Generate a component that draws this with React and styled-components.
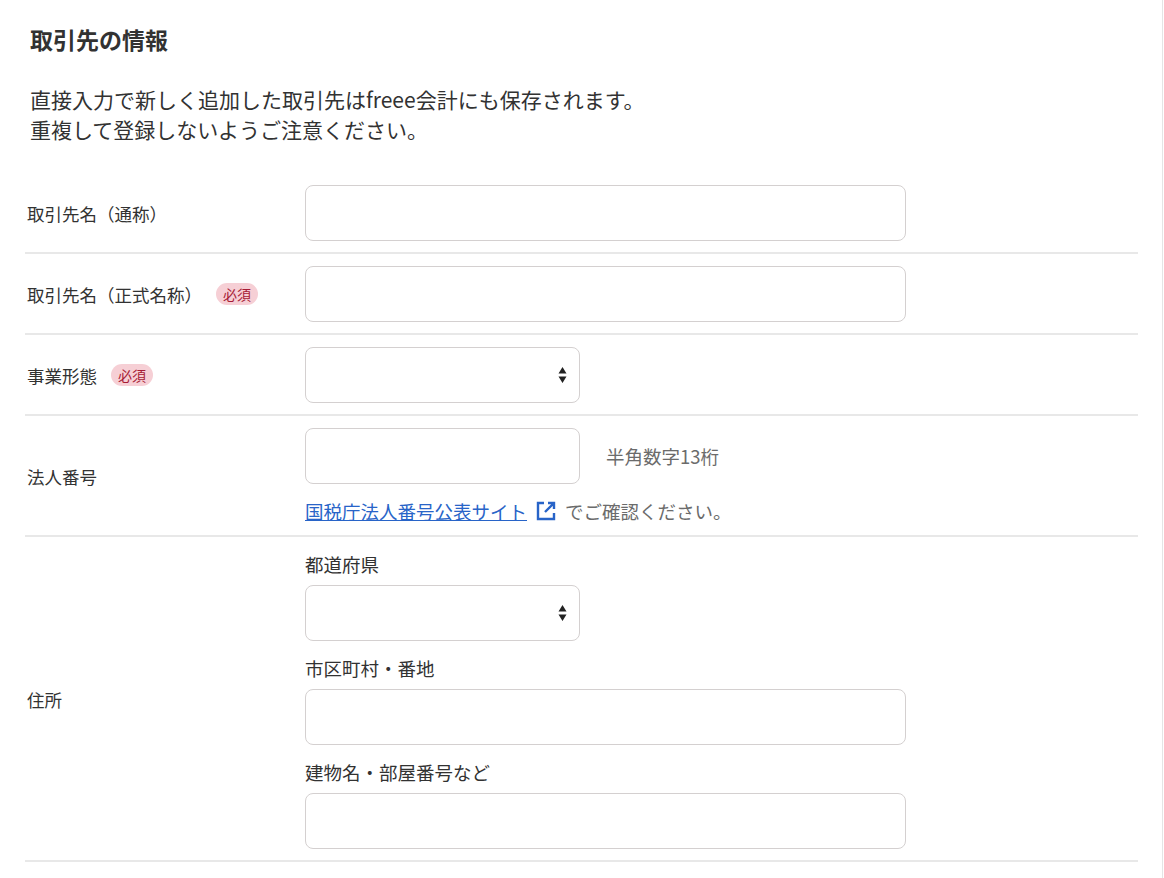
import React from 'react'
import styled, { createGlobalStyle } from 'styled-components'

const Global = createGlobalStyle`
  body { margin: 0; background: #fff; font-family: "Noto Sans CJK JP", "Noto Sans", sans-serif; color: #323232; }
`

const Panel = styled.div`
  width: 1163px;
  border-right: 1px solid #e5e5e5;
  box-sizing: border-box;
  padding: 20px 24px 16px 25px;
  min-height: 878px;
`

const Title = styled.h2`
  margin: 0 0 0 5px;
  font-size: 23px;
  font-weight: bold;
  line-height: 38px;
`

const Lead = styled.p`
  margin: 26px 0 29px 5px;
  font-size: 21px;
  line-height: 30px;
`

const Row = styled.div`
  display: grid;
  grid-template-columns: 280px 1fr;
  align-items: center;
  padding: 12px 0 11px;
  border-bottom: 2px solid #e8e8e8;
`

const Label = styled.div`
  display: flex;
  align-items: center;
  gap: 14px;
  font-size: 17.5px;
  padding-left: 2px;
`

const Required = styled.span`
  background: #f6cfd5;
  color: #a61b35;
  font-size: 14px;
  border-radius: 11px;
  padding: 1px 7px;
  line-height: 20px;
`

const Field = styled.div`
  display: flex;
  flex-direction: column;
`

const Line = styled.div`
  display: flex;
  align-items: center;
  gap: 26px;
`

const Input = styled.div`
  width: ${p => p.$w || 601}px;
  height: 56px;
  box-sizing: border-box;
  border: 1.5px solid #d4d0d0;
  border-radius: 8px;
  background: #fff;
  position: relative;
`

const Arrows = styled.svg`
  position: absolute;
  right: 12px;
  top: 50%;
  transform: translateY(-50%);
`

const Hint = styled.span`
  font-size: 18.5px;
  color: #6b6b6b;
`

const Note = styled.div`
  margin-top: 14px;
  font-size: 18.5px;
  color: #6b6b6b;
  display: flex;
  align-items: center;
  gap: 8px;
`

const Link = styled.a`
  color: #2864c8;
  text-decoration: underline;
`

const Sub = styled.div`
  font-size: 18.5px;
  line-height: 26px;
  margin: ${p => (p.$first ? '2px' : '14px')} 0 8px;
`

const Select = ({ w }) => (
  <Input $w={w}>
    <Arrows width="9" height="20" viewBox="0 0 9 20">
      <path d="M4.5 2L8.5 8.5H0.5Z M4.5 18L8.5 11.5H0.5Z" fill="#222" />
    </Arrows>
  </Input>
)

const External = () => (
  <svg width="22" height="22" viewBox="0 0 22 22" fill="none" stroke="#2864c8" strokeWidth="2.4">
    <path d="M9 3H3v16h16v-6" />
    <path d="M13 3h6v6M19 3l-9 9" />
  </svg>
)

export default function App() {
  return (
    <>
      <Global />
      <Panel>
        <Title>取引先の情報</Title>
        <Lead>
          直接入力で新しく追加した取引先はfreee会計にも保存されます。<br />
          重複して登録しないようご注意ください。
        </Lead>
        <Row>
          <Label>取引先名（通称）</Label>
          <Input />
        </Row>
        <Row>
          <Label>取引先名（正式名称）<Required>必須</Required></Label>
          <Input />
        </Row>
        <Row>
          <Label>事業形態<Required>必須</Required></Label>
          <Select w={275} />
        </Row>
        <Row>
          <Label>法人番号</Label>
          <Field>
            <Line><Input $w={275} /><Hint>半角数字13桁</Hint></Line>
            <Note>
              <Link href="#">国税庁法人番号公表サイト</Link>
              <External />
              <span>でご確認ください。</span>
            </Note>
          </Field>
        </Row>
        <Row>
          <Label>住所</Label>
          <Field>
            <Sub $first>都道府県</Sub>
            <Select w={275} />
            <Sub>市区町村・番地</Sub>
            <Input />
            <Sub>建物名・部屋番号など</Sub>
            <Input />
          </Field>
        </Row>
      </Panel>
    </>
  )
}
